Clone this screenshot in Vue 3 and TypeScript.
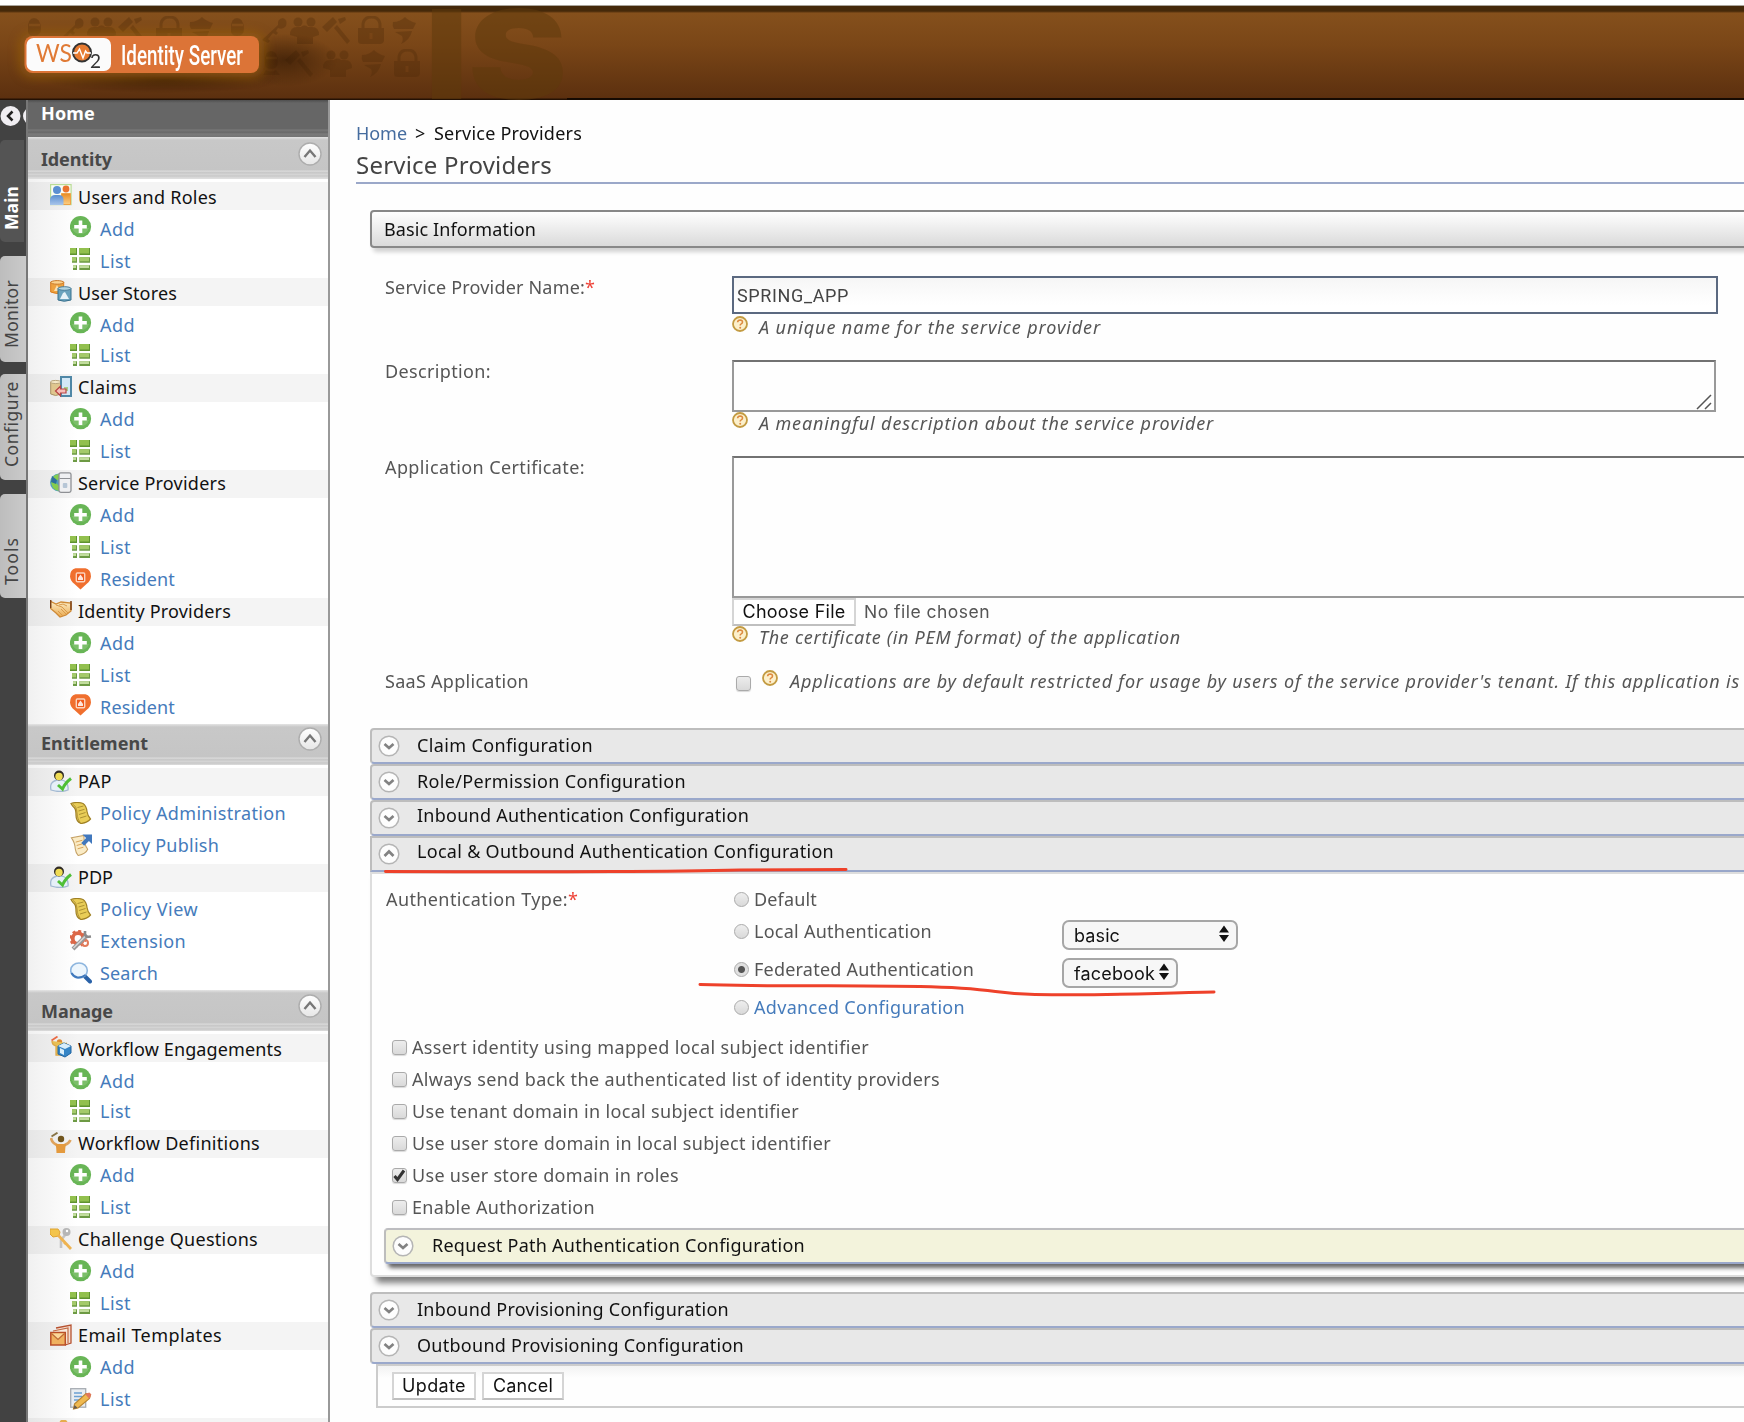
<script setup lang="ts">
import type { Directive } from 'vue'

interface Item { icon: string; label: string; w: number; dy?: number; iconDy?: number }
interface Group extends Item { children: Item[] }
interface Section { title: string; w: number; dy: number; pad: number; height: number; groups: Group[] }

// Spreads the letters of a label over a given width.
const vFit: Directive<HTMLElement, number> = {
  mounted(el, binding) {
    const natural = el.getBoundingClientRect().width
    const count = (el.textContent ?? '').length
    if (count > 0 && natural > 0) el.style.letterSpacing = `${(binding.value - natural) / count}px`
  },
}

const add = (dy = 0): Item => ({ icon: 'add', label: 'Add', w: 35, dy })
const list = (dy = 0, icon = 'list'): Item => ({ icon, label: 'List', w: 31, dy })
const resident = (iconDy = 0): Item => ({ icon: 'resident', label: 'Resident', w: 75, iconDy })

const sections: Section[] = [
  {
    title: 'Identity', w: 71, dy: 0, pad: 5, height: 42,
    groups: [
      { icon: 'users', label: 'Users and Roles', w: 139, dy: 2, children: [add(2), list(2)] },
      { icon: 'stores', label: 'User Stores', w: 99, dy: 2, children: [add(2), list()] },
      { icon: 'claims', label: 'Claims', w: 59, children: [add(), list()] },
      { icon: 'sp', label: 'Service Providers', w: 148, children: [add(), list(), resident()] },
      { icon: 'idp', label: 'Identity Providers', w: 153, children: [add(), list(), resident(-2)] },
    ],
  },
  {
    title: 'Entitlement', w: 107, dy: -1, pad: 3, height: 41,
    groups: [
      { icon: 'policyuser', label: 'PAP', w: 34, children: [
        { icon: 'scroll', label: 'Policy Administration', w: 186 },
        { icon: 'publish', label: 'Policy Publish', w: 119 },
      ] },
      { icon: 'policyuser', label: 'PDP', w: 35, children: [
        { icon: 'scroll', label: 'Policy View', w: 98 },
        { icon: 'extension', label: 'Extension', w: 86 },
        { icon: 'search', label: 'Search', w: 58 },
      ] },
    ],
  },
  {
    title: 'Manage', w: 72, dy: 0, pad: 4, height: 41,
    groups: [
      { icon: 'engage', label: 'Workflow Engagements', w: 204, dy: 2, children: [add(2), list()] },
      { icon: 'define', label: 'Workflow Definitions', w: 182, children: [add(), list()] },
      { icon: 'keys', label: 'Challenge Questions', w: 180, children: [add(), list()] },
      { icon: 'mail', label: 'Email Templates', w: 144, children: [add(), list(0, 'edit')] },
      { icon: 'person', label: '', w: 0, children: [] },
    ],
  },
]

const tabs = [
  { label: 'Main', w: 44, top: 40, height: 102, pad: 12, active: true },
  { label: 'Monitor', w: 68, top: 14, height: 106, pad: 14, active: false },
  { label: 'Configure', w: 86, top: 12, height: 106, pad: 13, active: false },
  { label: 'Tools', w: 48, top: 14, height: 104, pad: 13, active: false },
]

// Vertical labels are fitted along their height.
const vFitTall: Directive<HTMLElement, number> = {
  mounted(el, binding) {
    const natural = el.getBoundingClientRect().height
    const count = (el.textContent ?? '').length
    if (count > 0 && natural > 0) el.style.letterSpacing = `${(binding.value - natural) / count}px`
  },
}

const topBars = [
  { label: 'Claim Configuration', w: 176, dy: -1, open: false },
  { label: 'Role/Permission Configuration', w: 269, dy: -1, open: false },
  { label: 'Inbound Authentication Configuration', w: 332, dy: -3, open: false },
  { label: 'Local & Outbound Authentication Configuration', w: 417, dy: -3, open: true },
]
const bottomBars = [
  { label: 'Inbound Provisioning Configuration', w: 312 },
  { label: 'Outbound Provisioning Configuration', w: 327 },
]

const authTypes = [
  { label: 'Default', w: 63, select: '', selectW: 0, textW: 0 },
  { label: 'Local Authentication', w: 178, select: 'basic', selectW: 176, textW: 46 },
  { label: 'Federated Authentication', w: 220, select: 'facebook', selectW: 116, textW: 81 },
  { label: 'Advanced Configuration', w: 211, select: '', selectW: 0, textW: 0 },
]

const options = [
  { label: 'Assert identity using mapped local subject identifier', w: 457, on: false },
  { label: 'Always send back the authenticated list of identity providers', w: 528, on: false },
  { label: 'Use tenant domain in local subject identifier', w: 387, on: false },
  { label: 'Use user store domain in local subject identifier', w: 419, on: false },
  { label: 'Use user store domain in roles', w: 267, on: true },
  { label: 'Enable Authorization', w: 183, on: false },
]

const motifs = [
  { id: 'm-head', x: 25, y: 16 }, { id: 'm-key', x: 57, y: 16 }, { id: 'm-group', x: 87, y: 16 },
  { id: 'm-gavel', x: 117, y: 16 }, { id: 'm-lock', x: 155, y: 16 }, { id: 'm-shield', x: 188, y: 16 },
  { id: 'm-head', x: 228, y: 16 }, { id: 'm-key', x: 260, y: 16 }, { id: 'm-group', x: 290, y: 16 },
  { id: 'm-gavel', x: 321, y: 16 }, { id: 'm-lock', x: 357, y: 16 }, { id: 'm-shield', x: 391, y: 16 },
  { id: 'm-head', x: 262, y: 49 }, { id: 'm-gavel', x: 284, y: 49 }, { id: 'm-group', x: 323, y: 49 },
  { id: 'm-shield', x: 360, y: 49 }, { id: 'm-lock', x: 393, y: 49 },
]
</script>

<template>
  <svg class="defs" width="0" height="0" aria-hidden="true">
    <defs>
      <linearGradient id="g-skin" x1="0" y1="0" x2="0" y2="1"><stop offset="0" stop-color="#fdf0cc" /><stop offset="1" stop-color="#eaa94e" /></linearGradient>
      <linearGradient id="g-blue" x1="0" y1="0" x2="0" y2="1"><stop offset="0" stop-color="#5a8fd0" /><stop offset="1" stop-color="#a9c5ea" /></linearGradient>
      <linearGradient id="g-orange" x1="0" y1="0" x2="0" y2="1"><stop offset="0" stop-color="#e88a25" /><stop offset="1" stop-color="#fbd084" /></linearGradient>
      <linearGradient id="g-chev" x1="0" y1="0" x2="0" y2="1"><stop offset="0" stop-color="#ffffff" /><stop offset="1" stop-color="#e6e6e6" /></linearGradient>
      <radialGradient id="g-shade"><stop offset="0" stop-color="#2e1603" stop-opacity=".6" /><stop offset="1" stop-color="#2e1603" stop-opacity="0" /></radialGradient>
      <filter id="f-glow" x="-20%" y="-80%" width="140%" height="260%"><feGaussianBlur stdDeviation="6" /></filter>
    </defs>
    <symbol id="add" viewBox="0 0 22 22"><circle cx="10.5" cy="10.7" r="10.6" fill="#68b556" /><path d="M2 12a9 9 0 0 0 17 0z" fill="#84c373" opacity=".7" /><path d="M10.5 4.4v12.6M4.2 10.7h12.6" stroke="#fff" stroke-width="3.6" /></symbol>
    <symbol id="list" viewBox="0 0 22 22">
      <path d="M0 0h7v7H0zM9.3 0H20v7H9.3z" fill="#5f9330" /><path d="M0 0h6v5.5H0zM9.3 0H19v5.5H9.3z" fill="#92c04e" />
      <path d="M2 9.3h5v5.4H2zM9.3 9.3H20v5.4H9.3z" fill="#6d9a44" /><path d="M2 9.3h4v4H2zM9.3 9.3H19v4H9.3z" fill="#a4ca6a" />
      <path d="M3 17.3h4V22H3zM9.3 17.3H20V22H9.3z" fill="#6d9a44" /><path d="M3 17.3h3V20H3zM9.3 17.3H19V20H9.3z" fill="#c2dd9d" />
    </symbol>
    <symbol id="resident" viewBox="0 0 22 22"><path d="M5.500 .3h10Q21 1.500 21 8.500 20.500 13 16.500 16L10.500 21.500 4.500 16Q.5 13 0 8.500 0 1.500 5.500 .3z" fill="#f06f2e" /><rect x="6.300" y="5" width="8.400" height="8.800" rx="1" fill="#ef5a1c" stroke="#fbd3bd" stroke-width="1.400" /><path d="M10.500 6.500l2.500 3.500v2H8v-2z" fill="#fff" opacity=".85" /></symbol>
    <symbol id="users" viewBox="0 0 22 22"><rect x=".6" y=".6" width="20.500" height="20" fill="#fafdf5" stroke="#b9dc96" stroke-width="1.200" /><circle cx="16" cy="5" r="3.400" fill="#ea7430" /><path d="M11.500 9.500h9v11h-9z" fill="url(#g-orange)" stroke="#efa245" /><circle cx="7" cy="6" r="4" fill="#5b8fd2" /><path d="M0 21v-6q1-4 5-4h4q4 0 4.500 4v6z" fill="url(#g-blue)" /></symbol>
    <symbol id="stores" viewBox="0 0 22 22"><path d="M.7 2v10q6 3 13 0V2z" fill="#eea23f" stroke="#d97c1c" /><ellipse cx="7.200" cy="2.400" rx="6.500" ry="1.800" fill="#fbd38f" stroke="#c9792a" /><path d="M4 11l3-6 3 6z" fill="#fce1b2" /><path d="M8 8.500v11.500q6 2.500 13 0V8.500z" fill="#6ba3bd" stroke="#39708d" /><ellipse cx="14.500" cy="8.500" rx="6.500" ry="1.800" fill="#b2d4e1" stroke="#4a7e9a" /><path d="M10 19l3-6 2-1 4 7z" fill="#e8f3f8" /></symbol>
    <symbol id="claims" viewBox="0 0 22 22"><path d="M.7 6v12q5 3 10 0V6z" fill="#dfc68e" stroke="#aa9368" /><ellipse cx="5.600" cy="6" rx="5" ry="1.600" fill="#f5e9c8" stroke="#b9a57c" /><rect x="11" y="1" width="10" height="19" fill="#d3e8f6" stroke="#4f87a6" stroke-width="2" /><path d="M14 11h4v4h-4z" fill="#a8cf89" /><path d="M5.500 15l5-4.800v2.800H16v4h-5.500v2.800z" fill="#f6bfb8" stroke="#b84342" stroke-width="1.200" /></symbol>
    <symbol id="sp" viewBox="0 0 22 22"><circle cx="9" cy="10.500" r="9" fill="#4f9fc0" /><path d="M1 8q3-6 8-6v5l-4 3 4 4v5Q1 18 1 8z" fill="#86cd4e" /><path d="M2 4l5 4-1 4-5-2z" fill="#2e6f9f" /><rect x="9" y=".8" width="12" height="19.500" rx="1.800" fill="#eff0f2" stroke="#8e9094" stroke-width="1.300" /><path d="M9.500 6.500h11" stroke="#8e9094" /><rect x="12.800" y="11" width="4.500" height="5" rx="1" fill="#b6c6d6" /></symbol>
    <symbol id="idp" viewBox="0 0 22 22"><path d="M0 1l6 3 5-2 10 1v8l-5 4-6 2-4-4-6-5z" fill="url(#g-skin)" stroke="#cf8a36" stroke-width="1.300" /><path d="M6 5l6 2 6 6M9 5l4-1 4 2M8 11l5 5M11 9l5 5" fill="none" stroke="#d99a4b" stroke-width="1" /><path d="M.7 0v8M21 1v9" stroke="#7b4015" stroke-width="1.500" /></symbol>
    <symbol id="policyuser" viewBox="0 0 22 22"><path d="M1 20q-2-8 6-10h5q7 2 6 10-8 3-17 0z" fill="#e6f0f8" stroke="#a3b9d2" stroke-width="1.300" /><circle cx="9" cy="5.500" r="5" fill="#302b25" /><circle cx="9" cy="6.500" r="3.700" fill="#efdb54" /><path d="M8 15l4.500 4Q15 13 21 8.500" fill="none" stroke="#4fbf36" stroke-width="3" /></symbol>
    <symbol id="scroll" viewBox="0 0 22 22"><path d="M1 1.500Q7-.5 13 1.500q3.500 2.500 4 8 .5 4 3.500 7.500-3.500 4-9.500 4.500Q6 19.500 6 13.500 6 7.500 4.500 6 2.500 4.500 1 1.500z" fill="#e9cd57" stroke="#9f8024" stroke-width="1.200" /><path d="M3 2.500Q6.500 4 7 11t3.500 9.500" fill="none" stroke="#b3943a" stroke-width="1" /><path d="M7.500 5.500l6-1.500M8.500 9l6-1.700M9 12.500l6.500-2M10 16l6.500-2" stroke="#a58a2e" stroke-width=".9" /></symbol>
    <symbol id="publish" viewBox="0 0 23 22"><path d="M1.500 3.500l13-2.500q0 9 4 14.500-2 5-10 6.500Q6 19 5.500 15 5 8 1.500 3.500z" fill="#faebc5" stroke="#c5a165" stroke-width="1.100" /><path d="M6 8l7-2M7 11.500l6-1.700M8 15l6-1.700" stroke="#d79f52" stroke-width="1" /><path d="M13 0h10v10l-3.200-3.200-5 5-3-3 5-5z" fill="#4178bd" /></symbol>
    <symbol id="extension" viewBox="0 0 22 22"><circle cx="8" cy="8.500" r="5.300" fill="none" stroke="#dc6848" stroke-width="3.800" /><circle cx="8" cy="8.500" r="7.400" fill="none" stroke="#dc6848" stroke-width="2.500" stroke-dasharray="3 2.800" /><circle cx="15" cy="13" r="3" fill="none" stroke="#e27b5b" stroke-width="2" /><path d="M3 19L17 5" stroke="#989898" stroke-width="4" /><path d="M3.500 18L16 5.500" stroke="#d6d6d6" stroke-width="1.600" /><path d="M15 1v4l2 2 4-.5" fill="none" stroke="#8b8b8b" stroke-width="2.600" /></symbol>
    <symbol id="search" viewBox="0 0 22 22"><path d="M14.500 14l5.500 5.500" stroke="#2a62a8" stroke-width="4" stroke-linecap="round" /><ellipse cx="9" cy="8.500" rx="8.300" ry="7.500" fill="#edf6fd" stroke="#8eb6df" stroke-width="1.600" /><path d="M1.500 11q5 8 14 2" fill="none" stroke="#4079bd" stroke-width="2" /></symbol>
    <symbol id="engage" viewBox="0 0 22 22"><path d="M1.500 4.500L7.500.5" stroke="#e96a43" stroke-width="1.700" /><circle cx="9.500" cy="6" r="2.700" fill="#df8a31" /><path d="M2 5q0 4 4 5v9h7V10l4-3" fill="#e8bf55" stroke="#dda94a" stroke-width="1.300" /><path d="M8 10l6-3 7 3v7l-6 4-7-3z" fill="#3585c6" stroke="#2065a2" /><path d="M8 10l6-3 7 3-6 3zM10 12l4 2v5l-4-2z" fill="#d9eefa" /></symbol>
    <symbol id="define" viewBox="0 0 22 22"><path d="M1.500 4.500L7.500.7" stroke="#877345" stroke-width="1.900" /><circle cx="11" cy="7" r="3.200" fill="#70541c" /><path d="M1 6q1 5 6 7M20.500 8q-2 4-6 5" fill="none" stroke="#dea35d" stroke-width="2.700" /><path d="M5.500 12h10.500q-1 4-1 9H6.500q0-5-1-9z" fill="#e49a3e" /></symbol>
    <symbol id="keys" viewBox="0 0 22 22"><path d="M16 6L11 12v8" fill="none" stroke="#c4c4c4" stroke-width="2.600" /><circle cx="16.500" cy="4" r="4" fill="#b6b6b6" /><circle cx="17" cy="3" r="1.200" fill="#fff" /><path d="M0 1h8l2 3-1 4-6 1-3-3z" fill="#f3c44b" stroke="#dfa432" /><path d="M8 7l13 14M14 16l2-2" stroke="#eeb351" stroke-width="2.800" /></symbol>
    <symbol id="mail" viewBox="0 0 22 22"><path d="M6 4l15-3v18l-6 2" fill="#f5ded1" stroke="#b65230" stroke-width="1.300" /><path d="M3 7l15-3v15" fill="#f9eadd" stroke="#c16a43" stroke-width="1.200" /><rect x=".8" y="8.500" width="14.500" height="12.500" fill="#efb15f" stroke="#b94f28" stroke-width="1.500" /><path d="M1.500 9.500l6.500 6 6.500-6" fill="#fbd79a" stroke="#be6934" stroke-width="1.200" /></symbol>
    <symbol id="edit" viewBox="0 0 22 22"><rect x=".7" y=".7" width="15" height="18.500" fill="#e9edf1" stroke="#a7acb2" stroke-width="1.300" /><path d="M4 5h8M4 8.500h8M4 12h5" stroke="#6ba0d2" stroke-width="1.500" /><path d="M4.500 16L16 5.500l4.500 1-1 4L8 20l-4.500 1z" fill="#efb950" stroke="#b88430" stroke-width="1.100" /><path d="M15 6l4.500 5 1.800-4.500-2-2z" fill="#e2775c" /><path d="M3.500 21l1-4 3 2.800z" fill="#665a4d" /></symbol>
    <symbol id="person" viewBox="0 0 22 22"><circle cx="13.500" cy="4" r="4.500" fill="#e6ac4d" /></symbol>
    <symbol id="help" viewBox="0 0 16 16"><circle cx="8" cy="8" r="7" fill="#fcf0cb" stroke="#c39b42" stroke-width="1.800" /><path d="M5.600 6.300q.2-2.300 2.500-2.300 2.400.1 2.400 2 0 1.200-1.300 1.900-1 .5-1 1.500" fill="none" stroke="#dd8a40" stroke-width="1.600" /><circle cx="8.200" cy="11.700" r="1" fill="#dd8a40" /></symbol>
    <symbol id="chev-up" viewBox="0 0 24 24"><circle cx="12" cy="12" r="11" fill="url(#g-chev)" stroke="#adadad" stroke-width="1.400" /><path d="M6.500 15L12 8.500l5.500 6.500" fill="none" stroke="#777" stroke-width="2.400" /></symbol>
    <symbol id="dot-down" viewBox="0 0 22 22"><circle cx="11" cy="11" r="9.800" fill="#fdfdfd" stroke="#b5b5b5" stroke-width="1.500" /><path d="M6.500 9l4.500 4 4.500-4" fill="none" stroke="#828282" stroke-width="2.700" /></symbol>
    <symbol id="dot-up" viewBox="0 0 22 22"><circle cx="11" cy="11" r="9.800" fill="#fdfdfd" stroke="#b5b5b5" stroke-width="1.500" /><path d="M6.500 13l4.500-4.500 4.500 4.500" fill="none" stroke="#828282" stroke-width="2.700" /></symbol>
    <symbol id="m-head" viewBox="0 0 30 30"><path d="M3 12Q3 2 9 2t7 10q0 8-7 8t-6-8zM4 21q5 3 10 0l4 5H1z" /><path d="M4 9h11" stroke="#7d4b18" stroke-width="2.500" /></symbol>
    <symbol id="m-key" viewBox="0 0 30 30"><path d="M2 24L18 9q-1-6 5-7 5 2 3 8-3 4-8 2l-2 3 2 2-2 2-3-2-5 6 2 2-2 2z" /></symbol>
    <symbol id="m-group" viewBox="0 0 30 30"><circle cx="8" cy="6" r="4.500" /><circle cx="21" cy="6" r="4.500" /><circle cx="14.500" cy="14" r="4.500" /><path d="M0 19q0-8 7-8h15q7 0 7 8l-6 2v7H7v-7z" /></symbol>
    <symbol id="m-gavel" viewBox="0 0 30 30"><path d="M1 11L12 1l4 5L6 16zM13 12l3-3 13 16-3 3zM17 3l7-2 1 3-6 4z" /></symbol>
    <symbol id="m-lock" viewBox="0 0 30 30"><path d="M6 13V8q1-7 8.500-7T23 8v5" fill="none" stroke="currentColor" stroke-width="3" /><path d="M1 12h26v13q-1 3-4 3H5q-4 0-4-3z" /><path d="M12.500 17h3v6h-3z" fill="#6e3c12" /></symbol>
    <symbol id="m-shield" viewBox="0 0 30 30"><path d="M2 6q7 0 12-5 4 4 11 6l-3 6L3 13q-2-3-1-7zM4 16l17-1q-2 9-11 13 3-4 1-8z" /></symbol>
  </svg>

  <div class="page">
    <header class="banner">
      <svg class="art" width="760" height="94" viewBox="0 6 760 94">
        <g class="motif">
          <svg v-for="(m, i) in motifs" :key="i" :x="m.x" :y="m.y" width="30" height="30"><use :href="'#' + m.id" /></svg>
        </g>
        <text class="big" x="425" y="99" textLength="142" lengthAdjust="spacingAndGlyphs">IS</text>
        <ellipse cx="165" cy="80" rx="120" ry="13" fill="url(#g-shade)" />
        <ellipse cx="285" cy="60" rx="52" ry="26" fill="url(#g-shade)" />
        <rect x="20" y="33" width="244" height="44" rx="12" fill="#a0650f" opacity=".65" filter="url(#f-glow)" />
        <rect x="24.500" y="36" width="234.500" height="37" rx="8" fill="#dc7437" />
        <rect x="26.500" y="38" width="84.500" height="33" rx="7" fill="#fbfbfb" />
        <text class="ws" x="36" y="61.500" textLength="36" lengthAdjust="spacingAndGlyphs">WS</text>
        <circle cx="82" cy="52.500" r="9" fill="#e77b31" stroke="#333" stroke-width="2" />
        <path d="M73 53h4l2.500-4 3.500 9 2.500-7 1.500 2h4" fill="none" stroke="#fff" stroke-width="1.400" />
        <text class="two" x="90" y="68">2</text>
        <text class="brand" x="121" y="65" textLength="122" lengthAdjust="spacingAndGlyphs">Identity Server</text>
        <path d="M567 98h193v2H567z" fill="#150a02" />
      </svg>
      <span class="edge"></span>
    </header>

    <div class="body">
      <nav class="rail">
        <svg class="fold" width="26" height="24" viewBox="0 0 26 24"><circle cx="10.500" cy="12" r="10" fill="#f0eef2" /><path d="M12.500 7.500L8 12l4.500 4.500" fill="none" stroke="#222" stroke-width="2.500" /><circle cx="32" cy="12" r="9" fill="#f0eef2" /></svg>
        <div class="tabs">
          <div v-for="t in tabs" :key="t.label" class="tab" :class="{ active: t.active }" :style="{ height: t.height + 'px', marginTop: (t.active ? 0 : t.top) + 'px', paddingBottom: t.pad + 'px' }">
            <span v-fit-tall="t.w" class="vert">{{ t.label }}</span>
          </div>
        </div>
      </nav>

      <aside class="side">
        <div class="home"><span v-fit="54">Home</span></div>
        <template v-for="(s, si) in sections" :key="s.title">
          <div class="sect" :style="{ height: s.height + 'px', paddingTop: s.pad + 'px' }">
            <span v-fit="s.w" class="t" :style="{ marginTop: 7 + s.dy + 'px' }">{{ s.title }}</span>
            <svg width="24" height="24"><use href="#chev-up" /></svg>
          </div>
          <div class="groups">
            <div v-for="(g, gi) in s.groups" :key="gi" class="group" :class="{ last: gi === s.groups.length - 1 && si < 2 }">
              <div class="band">
                <svg width="22" height="22"><use :href="'#' + g.icon" /></svg>
                <span v-fit="g.w" class="t" :style="{ top: (g.dy ?? 0) - 1 + 'px' }">{{ g.label }}</span>
              </div>
              <div v-for="(c, ci) in g.children" :key="ci" class="item">
                <svg width="22" height="22" :style="{ marginTop: (c.iconDy ?? 0) + 'px' }"><use :href="'#' + c.icon" /></svg>
                <a v-fit="c.w" class="t" :style="{ top: (c.dy ?? 0) - 1 + 'px' }">{{ c.label }}</a>
              </div>
            </div>
          </div>
        </template>
      </aside>

      <main class="main">
        <div class="crumbs"><a v-fit="51">Home</a><span class="gt">&gt;</span><span v-fit="148">Service Providers</span></div>
        <h2><span v-fit="196">Service Providers</span></h2>

        <div class="content">
          <div class="basic"><span v-fit="152">Basic Information</span></div>

          <div class="row r1">
            <label><span v-fit="200">Service Provider Name:</span><b>*</b></label>
            <div class="field">
              <div class="input"><span v-fit="112">SPRING_APP</span></div>
              <div class="hint h1"><svg width="16" height="16"><use href="#help" /></svg><i v-fit="342">A unique name for the service provider</i></div>
            </div>
          </div>
          <div class="row r2">
            <label><span v-fit="106">Description:</span></label>
            <div class="field">
              <div class="area small"><svg width="16" height="16" viewBox="0 0 16 16"><path d="M1 15L15 1M9 15l6-6" stroke="#555" stroke-width="1.500" /></svg></div>
              <div class="hint h2"><svg width="16" height="16"><use href="#help" /></svg><i v-fit="455">A meaningful description about the service provider</i></div>
            </div>
          </div>
          <div class="row r3">
            <label><span v-fit="200">Application Certificate:</span></label>
            <div class="field">
              <div class="area large"></div>
              <div class="file"><span class="btn choose"><span v-fit="103">Choose File</span></span><span v-fit="126" class="none">No file chosen</span></div>
              <div class="hint h3"><svg width="16" height="16"><use href="#help" /></svg><i v-fit="422">The certificate (in PEM format) of the application</i></div>
            </div>
          </div>
          <div class="row r4">
            <label><span v-fit="144">SaaS Application</span></label>
            <div class="field saas">
              <span class="check"></span>
              <svg width="16" height="16"><use href="#help" /></svg>
              <i v-fit="950">Applications are by default restricted for usage by users of the service provider's tenant. If this application is</i>
            </div>
          </div>

          <div v-for="b in topBars" :key="b.label" class="bar" :class="{ open: b.open }">
            <svg width="22" height="22"><use :href="b.open ? '#dot-up' : '#dot-down'" /></svg>
            <span v-fit="b.w" class="t" :style="{ top: b.dy + 'px' }">{{ b.label }}</span>
          </div>

          <section class="panel">
            <div class="auth">
              <label><span v-fit="182">Authentication Type:</span><b>*</b></label>
              <div>
                <div v-for="(a, i) in authTypes" :key="a.label" class="type" :class="{ tall: i === 2 }">
                  <span class="radio" :class="{ on: i === 2 }"></span>
                  <span class="name" :class="{ link: i === 3 }"><span v-fit="a.w">{{ a.label }}</span></span>
                  <span v-if="a.select" class="select" :style="{ width: a.selectW + 'px' }">
                    <span v-fit="a.textW">{{ a.select }}</span>
                    <svg width="10" height="18" viewBox="0 0 10 18"><path d="M0 7.500L5 .5l5 7zM0 10h10l-5 7z" /></svg>
                  </span>
                </div>
              </div>
            </div>
            <div class="options">
              <div v-for="o in options" :key="o.label" class="opt">
                <span class="check"><svg v-if="o.on" width="13" height="13" viewBox="0 0 13 13"><path d="M1.500 7l3 3.500L11 1.500" fill="none" stroke="#333" stroke-width="3" /></svg></span>
                <span v-fit="o.w">{{ o.label }}</span>
              </div>
            </div>
            <div class="bar request">
              <svg width="22" height="22"><use href="#dot-down" /></svg>
              <span v-fit="373" class="t">Request Path Authentication Configuration</span>
            </div>
          </section>

          <div v-for="b in bottomBars" :key="b.label" class="bar">
            <svg width="22" height="22"><use href="#dot-down" /></svg>
            <span v-fit="b.w" class="t">{{ b.label }}</span>
          </div>
          <div class="actions">
            <span class="btn update"><span v-fit="64">Update</span></span>
            <span class="btn cancel"><span v-fit="60">Cancel</span></span>
          </div>
        </div>

        <svg class="marks" width="920" height="140" viewBox="380 862 920 140">
          <path d="M385.500 871.500Q640 872.500 740 870L846 869.500" />
          <path d="M700 984.500C780 987 840 985 920 986.500S990 994 1035 994.500C1110 996 1150 993 1214 992" />
        </svg>
      </main>
    </div>
  </div>
</template>

<style>
html, body { margin: 0; background: #fff; overflow: hidden; }
</style>

<style scoped>
.defs { position: absolute; }
.page { width: 1744px; height: 1422px; overflow: hidden; background: #fefefe; font-family: "Noto Sans", "Open Sans", sans-serif; font-size: 18px; line-height: 20px; color: #555; font-variant-ligatures: none; }
.page * { box-sizing: border-box; }
span, i, a { white-space: nowrap; }
[class~="t"], .crumbs > *, h2 span, label span, .hint i, .saas i, .opt span, .name > span, .btn > span, .input span, .select > span, .home span, .basic span, .none { display: inline-block; }
svg { display: block; flex: none; }

.banner { height: 100px; padding-top: 6px; display: flex; align-items: flex-end; background: linear-gradient(#fff 0 5px, #aaa59c 5px 6px, #45290a 6px 11px, #5e3710 12px, #85501c 13px, #7a4617 45px, #5c300f 98px, #241104 99px, #241104 100px); }
.edge { flex: 1; height: 2px; background: #150a02; }
.motif { fill: #4f2c0a; color: #4f2c0a; opacity: .34; }
.big { font: 900 124px Inter, sans-serif; fill: #5f3a0c; opacity: .5; }
.ws { font: 400 25px Lato, sans-serif; fill: #e07a35; }
.two { font: 19px Lato, sans-serif; fill: #333; }
.brand { font: 500 28px Roboto, sans-serif; fill: #fff; }

.body { display: flex; height: 1322px; }
.rail { width: 28px; flex: none; background: #424242; border-right: 2px solid #777; padding-top: 4px; }
.tabs { margin-top: 12px; }
.tab { width: 26px; display: flex; align-items: flex-end; background: linear-gradient(90deg, #bdbdbd, #cacaca); border-radius: 5px 0 0 5px; color: #444; }
.tab.active { width: 24px; background: #545454; color: #fff; font-weight: 700; }
.vert { writing-mode: vertical-rl; transform: rotate(180deg); line-height: 24px; margin-left: -1px; font-size: 17.500px; }

.side { width: 302px; flex: none; border-right: 2px solid #999; background: linear-gradient(90deg, #f1f1f1, #fff 50px); }
.home { height: 37px; padding: 3px 0 0 13px; color: #fff; font-weight: 700; background: linear-gradient(#4f4f4f, #666 3px, #666 29px, #6f6f6f 29px, #777 31px, #666 32px, #7b7b7b 34px, #747474 37px); }
.sect { display: flex; justify-content: space-between; padding: 0 6px 0 13px; background: linear-gradient(#e4e4e4, #c8c8c8 3px, #c5c5c5 33px, #dcdcdc 34px, #c2c2c2 36px, #d8d8d8 37px, #c8c8c8 39px, #ddd 41px); color: #484848; font-weight: 700; }
.sect .t { height: 20px; }
.groups { padding-top: 3px; }
.group { padding-bottom: 2px; }
.group.last { padding-bottom: 0; }
.band { height: 28px; margin-bottom: 2px; display: flex; padding: 2px 0 0 22px; background: rgba(0, 0, 0, .045); color: #111; }
.band .t { position: relative; line-height: 24px; margin-left: 6px; }
.item { height: 32px; display: flex; align-items: flex-start; padding: 4px 0 0 42px; }
.item .t { position: relative; line-height: 24px; margin-left: 8px; color: #457bbb; }

.main { position: relative; flex: 1; min-width: 0; overflow: hidden; padding: 18px 0 0 26px; }
.crumbs { height: 30px; line-height: 30px; color: #111; display: flex; }
.crumbs a { color: #456c9f; }
.gt { width: 27px; padding-left: 8px; }
h2 { margin: 0; height: 36px; line-height: 34px; font-size: 24px; font-weight: 400; color: #444; border-bottom: 2px solid #9ba8c9; }
.content { margin: 26px -20px 0 14px; }
.basic { height: 38px; padding-left: 12px; line-height: 34px; color: #111; border: 2px solid #888; border-radius: 4px; background: linear-gradient(#fff, #dadada); box-shadow: 3px 4px 4px rgba(0, 0, 0, .18); }
.row { display: grid; grid-template-columns: 347px 1fr; padding-left: 15px; }
label { display: block; padding-top: 1px; }
label b { font-weight: 400; color: #ee4338; }
.r1 { margin-top: 28px; height: 84px; }
.r2 { height: 96px; }
.r3 { height: 212px; }
.r4 { height: 60px; }
.r4 label { padding-top: 3px; }
.input { width: 986px; height: 38px; padding-left: 3px; line-height: 35px; font-family: Roboto, sans-serif; color: #444; border: 2px solid #5b6980; background: linear-gradient(#f6f6f6, #fff 80%); }
.area { border: 2px solid #999; border-top-color: #727272; }
.small { width: 984px; height: 52px; display: flex; justify-content: flex-end; align-items: flex-end; padding-right: 2px; }
.large { height: 142px; }
.hint { display: flex; }
.hint i { margin-left: 11px; color: #555; }
.h1 { line-height: 26px; padding-top: 0; }
.h1 svg { margin-top: 2px; }
.h2 { line-height: 23px; }
.h3 { line-height: 22px; }
.h3 i { margin-left: 11px; }
.file { display: flex; height: 28px; font-family: Inter, sans-serif; line-height: 27px; }
.btn { display: inline-block; height: 28px; line-height: 24px; text-align: center; border: 2px solid #d5d5d5; border-bottom-color: #bfbfbf; background: #fff; color: #111; font-family: Inter, sans-serif; font-size: 18px; }
.choose { width: 124px; }
.none { margin-left: 8px; font-size: 17.500px; }
.saas { display: flex; }
.check { width: 15px; height: 15px; flex: none; border: 1px solid #aaa; border-radius: 3px; background: linear-gradient(#ededed, #d9d9d9); box-shadow: 0 1px 1px rgba(0, 0, 0, .15); }
.saas .check { margin: 8px 11px 0 4px; }
.saas svg { margin-top: 2px; }
.saas i { margin: 3px 0 0 12px; }

.bar { height: 36px; display: flex; padding: 5px 0 0 6px; background: #e8e8e8; border: 2px solid #bdbdbd; border-bottom-color: #9aa8cb; border-radius: 4px; color: #111; }
.bar .t { position: relative; top: -1px; margin: 1px 0 0 17px; line-height: 20px; }
.bar.open { border-radius: 0; }
.panel { height: 405px; margin-bottom: 15px; padding: 9px 0 0 12px; border: 2px solid #ddd; border-radius: 0 0 4px 4px; box-shadow: 6px 6px 6px rgba(0, 0, 0, .5); background: #fefefe; }
.auth { display: grid; grid-template-columns: 350px 1fr; }
.auth label { padding: 6px 0 0 2px; }
.type { height: 32px; display: flex; align-items: center; }
.type.tall { height: 44px; }
.radio { width: 15px; height: 15px; flex: none; border: 1px solid #aaa; border-radius: 50%; background: linear-gradient(#eee, #d9d9d9); }
.radio.on { background: radial-gradient(circle, #555 0 3px, #e0e0e0 4px); }
.name { flex: none; width: 308px; margin-left: 5px; }
.link { color: #457bbb; }
.select { height: 30px; margin-top: 8px; display: flex; justify-content: space-between; padding: 0 7px 0 10px; border: 2px solid #a6a6a6; border-radius: 7px; background: #f7f7f7; color: #111; font-family: Inter, sans-serif; line-height: 28px; }
.select svg { margin-top: 3px; fill: #111; }
.options { margin-top: 8px; padding-left: 8px; }
.opt { height: 32px; display: flex; align-items: center; gap: 5px; }
.request { margin-top: 5px; background: #f3f3dc; box-shadow: 4px 4px 4px rgba(0, 0, 0, .6); border-top-color: #bdbdc0; }
.request .t { margin-left: 18px; }
.actions { height: 44px; margin-left: 6px; padding: 6px 0 0 14px; display: flex; gap: 6px; border: 2px solid #ccc; background: linear-gradient(#f2f2f2, #fefefe 12px); }
.update { width: 84px; }
.cancel { width: 82px; }
.marks { position: absolute; left: 50px; top: 762px; fill: none; stroke: #ee412a; stroke-width: 3; stroke-linecap: round; }
</style>
